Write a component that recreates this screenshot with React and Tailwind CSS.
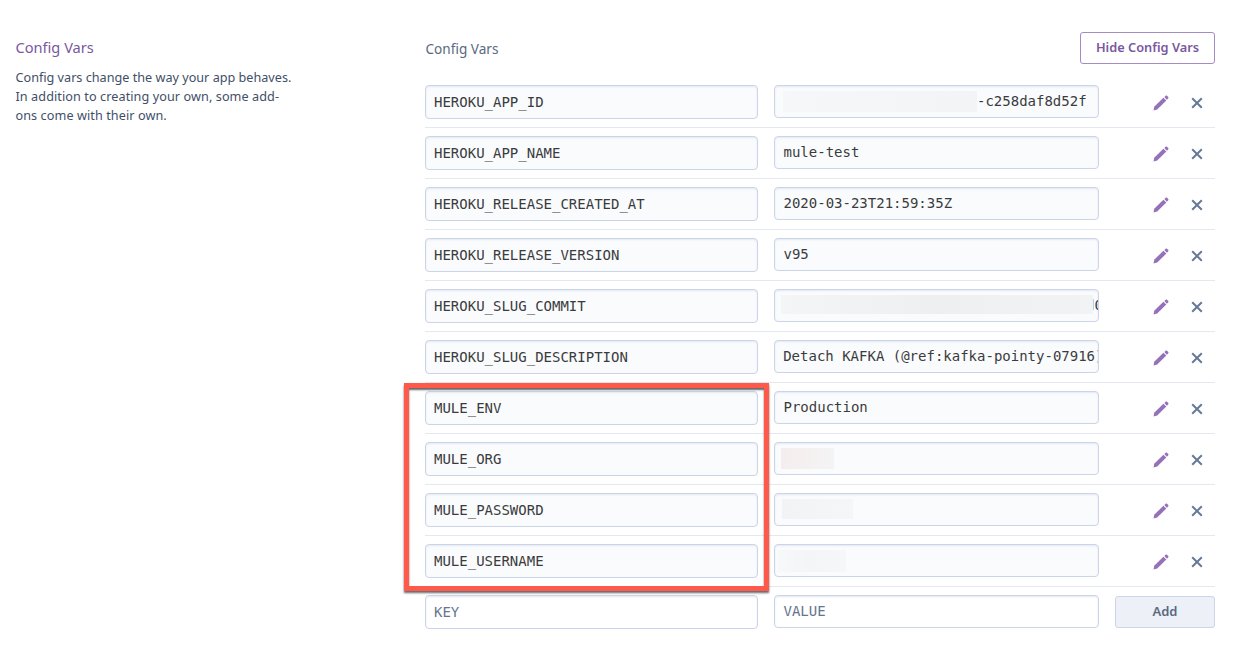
const MONO = "font-['DejaVu_Sans_Mono',monospace] text-[14px] whitespace-pre";

const rows = [
  {
    name: 'HEROKU_APP_ID',
    value: '-c258daf8d52f',
    indent: 'pl-[202px]',
    mask: 'left-[8px] top-[5px] w-[194px] h-[21px] bg-gradient-to-r from-[#f6f7f8] to-[#f3f4f5]',
  },
  { name: 'HEROKU_APP_NAME', value: 'mule-test' },
  { name: 'HEROKU_RELEASE_CREATED_AT', value: '2020-03-23T21:59:35Z' },
  { name: 'HEROKU_RELEASE_VERSION', value: 'v95' },
  {
    name: 'HEROKU_SLUG_COMMIT',
    value: 'd0',
    indent: 'pl-[311px]',
    mask: 'left-[6px] top-[5px] w-[312px] h-[19px] bg-gradient-to-r from-[#f4f5f6] via-[#eeeff1] to-[#f2f3f5]',
  },
  { name: 'HEROKU_SLUG_DESCRIPTION', value: 'Detach KAFKA (@ref:kafka-pointy-07916)', indent: 'pl-[8.2px]' },
  { name: 'MULE_ENV', value: 'Production' },
  {
    name: 'MULE_ORG',
    value: '',
    mask: 'left-[6px] top-[5px] w-[53px] h-[21px] bg-gradient-to-r from-[#f5eded] to-[#f4f4f5]',
  },
  {
    name: 'MULE_PASSWORD',
    value: '',
    mask: 'left-[7px] top-[5px] w-[71px] h-[20px] bg-gradient-to-r from-[#f2f3f5] to-[#f5f6f7]',
  },
  {
    name: 'MULE_USERNAME',
    value: '',
    mask: 'left-[3px] top-[5px] w-[68px] h-[22px] bg-gradient-to-r from-[#f7f8f9] via-[#f4f5f6] to-[#f6f7f8]',
  },
];

const fieldBase =
  'relative overflow-hidden rounded-[4px] border border-[#cbd5e8] shadow-[inset_0_1px_2px_#e2e8f3]';

function Pencil() {
  return (
    <svg className="block h-4 w-4" viewBox="0 0 16 16" fill="#9571b8">
      <path d="M.6 15.4 1.2 11.8 10.4 2.7 13.3 5.6 4.2 14.6Z" />
      <path d="M11.3 2.1 12.5.9C13 .4 13.7.4 14.2.9L15.1 1.8C15.6 2.3 15.6 3 15.1 3.5L13.9 4.7Z" />
    </svg>
  );
}

function Cross() {
  return (
    <svg className="block h-3 w-3" viewBox="0 0 12 12" fill="none" stroke="#667997" strokeWidth="2">
      <path d="M1.2 1.2 10.8 10.8M10.8 1.2 1.2 10.8" />
    </svg>
  );
}

function KeyField({ children, className }) {
  return (
    <div className={`${fieldBase} ${MONO} h-[34px] w-[333px] pl-2 leading-[33px] ${className}`}>{children}</div>
  );
}

function ValueField({ children, mask, indent = 'pl-[8.5px]', className }) {
  return (
    <div className={`${fieldBase} ${MONO} ml-4 h-[33px] w-[325px] leading-[31px] ${indent} ${className}`}>
      {children}
      {mask && <span className={`absolute ${mask}`} />}
    </div>
  );
}

export default function App() {
  return (
    <div className="flex h-[660px] w-[1254px] overflow-hidden bg-white pl-[15px] font-['Noto_Sans','Open_Sans',sans-serif]">
      <aside className="w-[410px] shrink-0 pt-9 pl-[0.5px]">
        <h2 className="text-[14.6px] leading-[22px] text-[#79589f]">Config Vars</h2>
        <p className="mt-[10px] text-[12.65px] leading-[19px] text-[#3f4f68]">
          Config vars change the way your app behaves.
          <br />
          <span className="tracking-[0.08px]">In addition to creating your own, some add-</span>
          <br />
          <span className="tracking-[0.08px]">ons come with their own.</span>
        </p>
      </aside>

      <main className="w-[790px] shrink-0">
        <header className="flex h-[77px] items-start justify-between pt-8">
          <h3 className="pt-[7px] pl-[0.5px] text-[13.6px] leading-5 text-[#596981]">Config Vars</h3>
          <button className="h-8 w-[135px] rounded-[3px] border border-[#a58bc4] pb-px text-[12.8px] leading-[29px] font-semibold whitespace-nowrap text-[#79589f]">
            Hide Config Vars
          </button>
        </header>

        <div className="relative">
          {rows.map((row) => (
            <div key={row.name} className="flex h-[51px] items-start border-b border-[#e3e8f1] pt-2">
              <KeyField className="bg-[#fafbfd] text-[#3a3b3e]">{row.name}</KeyField>
              <ValueField className="bg-[#fafbfd] text-[#3a3b3e]" mask={row.mask} indent={row.indent}>
                {row.value}
              </ValueField>
              <div className="flex h-9 grow items-center justify-end gap-[22px] pr-3">
                <Pencil />
                <Cross />
              </div>
            </div>
          ))}
          <div className="flex items-start pt-2">
            <KeyField className="bg-white text-[#65758f]">KEY</KeyField>
            <ValueField className="bg-white text-[#65758f]">VALUE</ValueField>
            <button className="mt-px ml-4 h-8 w-[100px] rounded-[3px] border border-[#cbd5e8] bg-[#edf0f6] pb-0.5 text-[13px] leading-[28px] font-semibold text-[#596981]">
              Add
            </button>
          </div>
          <div className="absolute top-[306px] left-[-21px] h-[208px] w-[365px] border-[5px] border-[#ff594b] shadow-[0_2px_2px_#666,inset_0_2px_2px_#666]" />
        </div>
      </main>
    </div>
  );
}
